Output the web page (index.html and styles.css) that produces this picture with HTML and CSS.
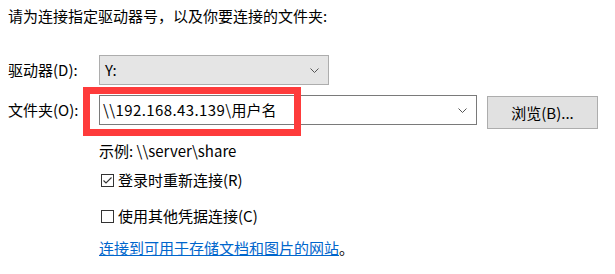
FILE: index.html
```html
<!DOCTYPE html>
<html lang="zh-CN">
<head>
    <meta charset="UTF-8">
    <title>映射网络驱动器</title>
    <link rel="stylesheet" href="styles.css">
</head>
<body>
    <div class="dialog">
        <p class="intro">请为连接指定驱动器号，以及你要连接的文件夹:</p>

        <div class="field">
            <label class="label">驱动器(D):</label>
            <div class="combo combo-drive">
                <span class="combo-value">Y:</span>
                <svg class="chevron" width="9" height="5" viewBox="0 0 9 5"><polyline points="0.5,0.5 4.5,4.5 8.5,0.5" fill="none" stroke="#555" stroke-width="1"/></svg>
            </div>
        </div>

        <div class="field field-folder">
            <label class="label">文件夹(O):</label>
            <div class="combo combo-folder">
                <span class="combo-value"><span class="path">\\192.168.43.139\</span>用户名</span>
                <svg class="chevron" width="9" height="5" viewBox="0 0 9 5"><polyline points="0.5,0.5 4.5,4.5 8.5,0.5" fill="none" stroke="#555" stroke-width="1"/></svg>
            </div>
            <button class="btn">浏览(B)...</button>
            <div class="highlight"></div>
        </div>

        <div class="options">
            <p class="example">示例: \\server\share</p>
            <div class="check">
                <span class="box">
                    <svg width="11" height="11" viewBox="0 0 11 11"><polyline points="1.5,5.5 4,8 9.5,2.5" fill="none" stroke="#333" stroke-width="1.1"/></svg>
                </span>
                <span>登录时重新连接(R)</span>
            </div>
            <div class="check check-second">
                <span class="box"></span>
                <span>使用其他凭据连接(C)</span>
            </div>
            <p class="link-row"><a href="#" class="link">连接到可用于存储文档和图片的网站</a>。</p>
        </div>
    </div>
</body>
</html>
```

FILE: styles.css
```css
body {
    margin: 0;
    background: #fff;
    color: #000;
    font-family: "Noto Sans CJK SC", "Noto Sans", sans-serif;
    font-size: 15px;
}
p {
    margin: 0;
}
.dialog {
    padding: 6px 0 0 8px;
}
.intro {
    line-height: 20px;
}
.field {
    display: flex;
    align-items: flex-start;
    margin-top: 29px;
    position: relative;
}
.field-folder {
    margin-top: 10px;
}
.label {
    width: 91px;
    line-height: 30px;
}
.combo {
    box-sizing: border-box;
    height: 30px;
    display: flex;
    align-items: center;
    justify-content: space-between;
    padding: 0 9px 0 4px;
}
.combo-drive {
    width: 230px;
    background: #e5e5e5;
    border: 1px solid #adadad;
    padding-left: 5px;
}
.combo-folder {
    width: 378px;
    background: #fff;
    border: 1px solid #7a7a7a;
    padding-left: 3px;
}
.combo-value {
    line-height: 20px;
}
.path {
    letter-spacing: 0.4px;
}
.chevron {
    display: block;
}
.btn {
    box-sizing: border-box;
    width: 111px;
    height: 33px;
    margin: 1px 0 0 10px;
    background: #e1e1e1;
    border: 1px solid #adadad;
    font: inherit;
    color: #000;
    padding: 0;
}
.highlight {
    position: absolute;
    left: 75px;
    top: -8px;
    width: 218px;
    height: 49px;
    box-sizing: border-box;
    border: 7px solid #fe3b3b;
}
.options {
    padding-left: 91px;
    margin-top: 12px;
}
.example {
    line-height: 20px;
}
.check {
    display: flex;
    align-items: center;
    line-height: 20px;
    margin-top: 9px;
}
.check-second {
    margin-top: 16px;
}
.box {
    box-sizing: border-box;
    width: 13px;
    height: 13px;
    margin: 0 4px 0 2px;
    border: 1px solid #333;
    display: flex;
    align-items: center;
    justify-content: center;
}
.box svg {
    display: block;
}
.link-row {
    line-height: 20px;
    margin-top: 12px;
}
.link {
    color: #0066cc;
    text-decoration: underline;
}
```
